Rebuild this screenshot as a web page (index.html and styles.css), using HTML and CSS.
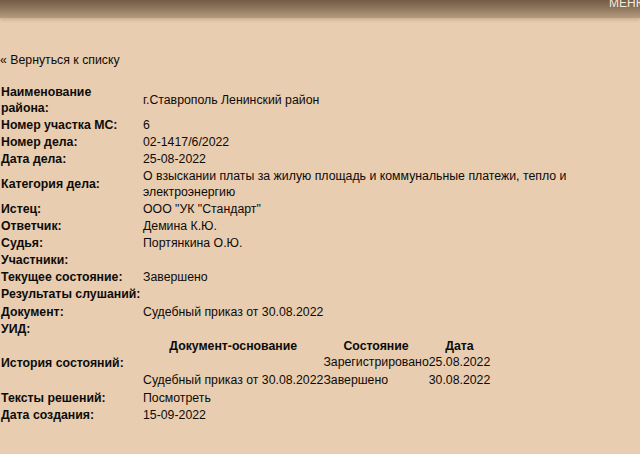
FILE: index.html
```html
<!DOCTYPE html>
<html lang="ru">
<head>
<meta charset="utf-8">
<title>Карточка дела</title>
<link rel="stylesheet" href="styles.css">
</head>
<body>
<header class="topbar">
  <span class="menu">МЕНЮ</span>
</header>
<main class="content">
  <a class="back" href="#">« Вернуться к списку</a>
  <table class="case">
    <tr><th>Наименование района:</th><td>г.Ставрополь Ленинский район</td></tr>
    <tr><th>Номер участка МС:</th><td>6</td></tr>
    <tr><th>Номер дела:</th><td>02-1417/6/2022</td></tr>
    <tr><th>Дата дела:</th><td>25-08-2022</td></tr>
    <tr><th>Категория дела:</th><td>О взыскании платы за жилую площадь и коммунальные платежи, тепло и электроэнергию</td></tr>
    <tr><th>Истец:</th><td>ООО "УК "Стандарт"</td></tr>
    <tr><th>Ответчик:</th><td>Демина К.Ю.</td></tr>
    <tr><th>Судья:</th><td>Портянкина О.Ю.</td></tr>
    <tr><th>Участники:</th><td></td></tr>
    <tr><th>Текущее состояние:</th><td>Завершено</td></tr>
    <tr><th>Результаты слушаний:</th><td></td></tr>
    <tr class="doc"><th>Документ:</th><td>Судебный приказ от 30.08.2022</td></tr>
    <tr><th>УИД:</th><td></td></tr>
    <tr class="history"><th>История состояний:</th><td>
      <table class="states">
        <tr><th>Документ-основание</th><th>Состояние</th><th>Дата</th></tr>
        <tr><td></td><td>Зарегистрировано</td><td>25.08.2022</td></tr>
        <tr class="last"><td>Судебный приказ от 30.08.2022</td><td>Завершено</td><td>30.08.2022</td></tr>
      </table>
    </td></tr>
    <tr><th>Тексты решений:</th><td><a class="plain" href="#">Посмотреть</a></td></tr>
    <tr><th>Дата создания:</th><td>15-09-2022</td></tr>
  </table>
</main>
</body>
</html>
```

FILE: styles.css
```css
html, body {
  margin: 0;
  padding: 0;
}
body {
  width: 640px;
  height: 454px;
  overflow: hidden;
  background: #e8cdb0;
  font-family: "Liberation Sans", Arial, sans-serif;
  font-size: 12.3px;
  line-height: 16px;
  color: #0d0b09;
}
.topbar {
  height: 18px;
  background: linear-gradient(to bottom, #735c45 0%, #8d755b 45%, #b59b80 100%);
  display: flex;
  justify-content: flex-end;
  overflow: hidden;
  box-shadow: 0 2px 3px rgba(120, 90, 60, 0.25);
}
.menu {
  color: #f4ece2;
  font-size: 12px;
  line-height: 12px;
  margin-top: -3px;
  margin-right: -20px;
  width: 51px;
}
.content {
  padding-top: 34px;
}
.back {
  display: block;
  color: inherit;
  text-decoration: none;
  margin-bottom: 15px;
}
.plain {
  color: inherit;
  text-decoration: none;
}
.case {
  border-collapse: collapse;
  width: 640px;
}
.case > tbody > tr > th,
.case > tbody > tr > td {
  padding: 0.5px 0 0.5px 0;
  vertical-align: middle;
  text-align: left;
}
.case > tbody > tr > th {
  font-weight: bold;
  width: 139.5px;
  padding-left: 1px;
  padding-right: 2.5px;
}
.case > tbody > tr.doc > th,
.case > tbody > tr.doc > td {
  padding-top: 1.5px;
}
.states {
  border-collapse: collapse;
}
.states th,
.states td {
  padding: 0.5px 0;
  text-align: left;
}
.states th {
  text-align: center;
  font-weight: bold;
  padding: 0;
}
.states tr.last td {
  padding-top: 1.5px;
}
```
